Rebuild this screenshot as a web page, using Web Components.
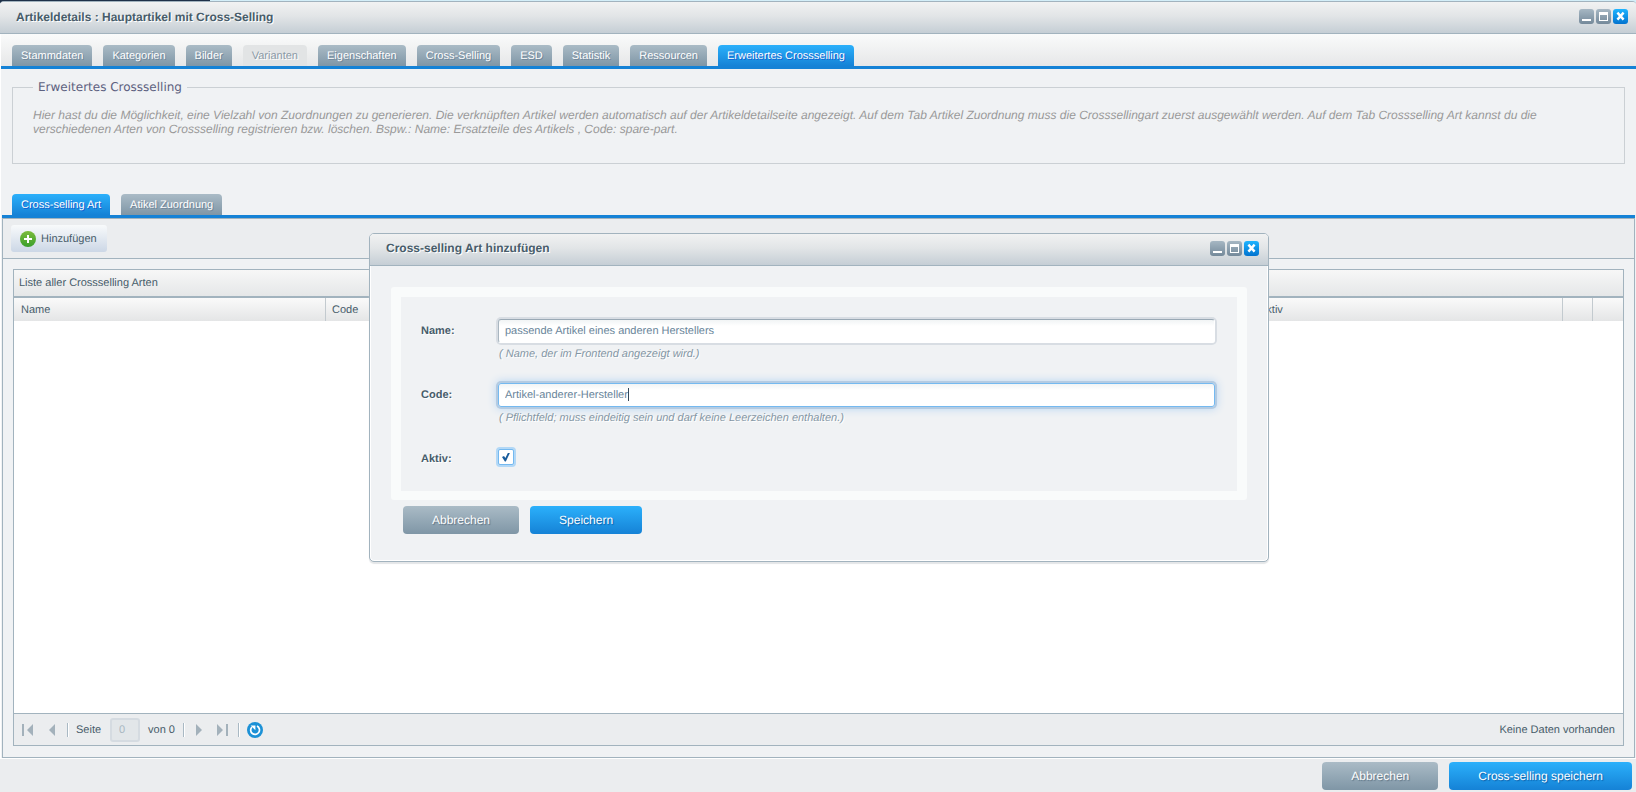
<!DOCTYPE html>
<html lang="de">
<head>
<meta charset="utf-8">
<title>Artikeldetails : Hauptartikel mit Cross-Selling</title>
<style>
html, body { margin: 0; height: 100%; }
body {
  --line: #a2b3be; --blue: #1582d6; --ink: #475c6a; --panel: #f0f2f4; --bar: #ebedef;
  font-family: "Liberation Sans", Arial, sans-serif; font-size: 11px; line-height: 14px; text-rendering: geometricPrecision;
  color: var(--ink); background: linear-gradient(90deg, #1f3148 210px, #d3eef8 210px);
  display: flex; flex-direction: column; padding-top: 1px; box-sizing: border-box; overflow: hidden;
}
</style>
</head>
<body>
<article-window></article-window>
<script>
const define = (name, html, after) => {
  const t = document.createElement('template');
  t.innerHTML = '<style>*{box-sizing:border-box}button,input{font:inherit;margin:0;text-rendering:inherit}</style>' + html;
  customElements.define(name, class extends HTMLElement {
    constructor() {
      super();
      this.attachShadow({ mode: 'open' }).append(t.content.cloneNode(true));
    }
    connectedCallback() { if (after) after(this, this.shadowRoot); }
  });
};

/* Minimise, maximise and close buttons */
define('window-tools', `
<style>
:host { display: flex; gap: 2px; }
button { width: 15px; height: 15px; padding: 0; border: 0; border-radius: 3px; background: linear-gradient(#a6b7c3, #74899a); }
button.close { background: linear-gradient(#1fb4ff, #0273cf); }
svg { display: block; }
</style>
<button type="button" aria-label="Minimieren"><svg width="15" height="15"><path d="M3 10h9v2H3z" fill="#fff"/></svg></button>
<button type="button" aria-label="Maximieren"><svg width="15" height="15"><path d="M3 3h9v9H3zM4 6v5h7V6z" fill="#fff" fill-rule="evenodd"/></svg></button>
<button type="button" aria-label="Schließen" class="close"><svg width="15" height="15"><path d="M4.4 3.6l6.2 7M10.6 3.6l-6.2 7" stroke="#fff" stroke-width="2.4"/></svg></button>`);

/* Title bar of a window */
define('title-bar', `
<style>
:host { display: flex; align-items: center; justify-content: space-between; height: 32px; box-sizing: border-box;
  padding: 0 8px 2px 16px; border-bottom: 1px solid var(--line); background: linear-gradient(#f1f2f2, #e2e5e7 45%, #c5ced5); }
h1 { margin: 0; font-size: 12px; line-height: 16px; text-shadow: 1px 1px 0 #fff; }
</style>
<h1><slot></slot></h1><window-tools></window-tools>`);

define('tab-item', `
<style>
:host { display: block; }
button { display: block; height: 21px; padding: 0 9px; border: 0; border-radius: 4px 4px 0 0; color: #fff; white-space: nowrap;
  background: linear-gradient(#aabbc6, #7f96a6); text-shadow: 1px 1px 0 #71879a; }
:host([active]) button { background: linear-gradient(#2bb0fb, #1582d6); text-shadow: 1px 1px 0 #1560cf; }
button:disabled { background: #e2e4e5; color: #8b9aa6; text-shadow: 1px 1px 0 #fff; }
</style>
<button type="button" role="tab"><slot></slot></button>`, (host, root) => {
  const b = root.querySelector('button');
  b.disabled = host.hasAttribute('disabled');
  b.setAttribute('aria-selected', host.hasAttribute('active'));
});

define('tab-bar', `
<style>
:host { display: flex; align-items: flex-end; gap: 11px; padding: 0 11px; box-sizing: border-box; border-bottom: 3px solid var(--blue); }
</style><slot></slot>`);

define('push-button', `
<style>
:host { display: block; }
button { display: block; height: 28px; padding: 0 29px; border: 0; border-radius: 4px; color: #fff; font-size: 12px; white-space: nowrap;
  background: linear-gradient(#aabbc6, #7f96a6); text-shadow: 1px 1px 1px #5e7485; }
:host([primary]) button { background: linear-gradient(#2bb0fb, #1582d6); text-shadow: 1px 1px 1px #0b5fa8; }
</style>
<button type="button"><slot></slot></button>`);

define('info-box', `
<style>
:host { display: block; padding: 11px 11px 0 12px; }
fieldset { margin: 0; padding: 0 20px; height: 84px; border: 1px solid #cbd0d4; min-width: 0; }
legend { padding: 0 5px; font: 12px/14px "DejaVu Sans", Verdana, sans-serif; color: #5d6180; }
p { margin: 14px 0 0; font-size: 12px; line-height: 14px; font-style: italic; color: #999; }
</style>
<fieldset><legend>Erweitertes Crossselling</legend><p><slot></slot></p></fieldset>`);

define('list-toolbar', `
<style>
:host { display: flex; align-items: center; height: 40px; box-sizing: border-box; padding: 0 8px; background: var(--bar); border-bottom: 1px solid var(--line); }
button { display: flex; align-items: center; gap: 5px; height: 27px; padding: 0 10px 0 9px; border: 0; border-radius: 3px; color: inherit;
  background: linear-gradient(#f8fafb, #ccd7e6); }
</style>
<button type="button"><svg width="16" height="16"><defs><linearGradient id="g" x2="0" y2="1"><stop stop-color="#7cbc3c"/><stop offset="1" stop-color="#3a9f2c"/></linearGradient></defs>
<circle cx="8" cy="8" r="8" fill="url(#g)"/><path d="M8 4v8M4 8h8" stroke="#fff" stroke-width="2"/></svg><span>Hinzufügen</span></button>`);

define('paging-bar', `
<style>
:host { display: flex; align-items: center; height: 32px; box-sizing: border-box; padding: 0 8px; background: var(--bar); border-top: 1px solid var(--line); }
button { width: 12px; height: 16px; padding: 0; border: 0; background: none; }
svg { display: block; }
i { width: 2px; height: 14px; border-left: 1px solid #a9b9c4; border-right: 1px solid #fff; }
label { display: flex; align-items: center; gap: 9px; margin: 0 8px 0 7px; }
input { width: 30px; height: 24px; padding: 0 7px; border: 2px solid #d5dbe1; border-radius: 3px; background: #e2e6e9; color: #a9b8c2; }
.prev { margin: 0 7px 0 14px; }
.sep { margin: 0 11px 0 8px; }
.last { margin: 0 9px; }
button.reload { width: 16px; margin-left: 7px; }
p { margin: 0 0 0 auto; }
</style>
<button type="button" aria-label="Erste Seite" disabled><svg width="12" height="16"><path d="M0 2h2v12H0zM11 2v12L5 8z" fill="#a3b1bb"/></svg></button>
<button type="button" aria-label="Vorherige Seite" disabled class="prev"><svg width="12" height="16"><path d="M7 2v12L1 8z" fill="#a3b1bb"/></svg></button><i></i>
<label>Seite <input type="text" value="0" disabled></label><span>von 0</span>
<i class="sep"></i>
<button type="button" aria-label="Nächste Seite" disabled><svg width="12" height="16"><path d="M0 2v12l6-6z" fill="#a3b1bb"/></svg></button>
<button type="button" aria-label="Letzte Seite" disabled class="last"><svg width="12" height="16"><path d="M0 2v12l6-6zM9 2h2v12H9z" fill="#a3b1bb"/></svg></button><i></i>
<button type="button" aria-label="Aktualisieren" class="reload"><svg width="16" height="16"><circle cx="8" cy="8" r="8" fill="#1c91d6"/><path d="M10 4.1A4.4 4.4 0 1 1 4.9 5" fill="none" stroke="#fff" stroke-width="1.7"/><path d="M3.6 3.4h4.8v4.8z" fill="#fff"/></svg></button>
<p>Keine Daten vorhanden</p>`);

define('type-grid', `
<style>
:host { display: flex; flex-direction: column; flex: 1; margin: 10px 10px 11px; border: 1px solid var(--line); background: #fff; }
h2 { margin: 0; height: 28px; padding: 6px 5px; font-size: 11px; line-height: 14px; font-weight: 400; border-bottom: 2px solid var(--line);
  background: linear-gradient(#f7f7f7, #e5e7e8); }
table { width: 100%; table-layout: fixed; border-collapse: separate; border-spacing: 0; }
th { height: 23px; padding: 0 7px; text-align: left; font-weight: 400; background: linear-gradient(#fafafa, #e4e5e6); }
th + th { border-left: 1px solid #c3cacf; padding-left: 6px; }
.name { width: 311px; }
.aktiv { width: 310px; }
.act { width: 30px; }
.end { width: 31px; }
.body { flex: 1; }
</style>
<h2>Liste aller Crossselling Arten</h2>
<table><thead><tr><th class="name">Name</th><th>Code</th><th class="aktiv">Aktiv</th><th class="act"></th><th class="end"></th></tr></thead></table>
<div class="body"></div>
<paging-bar></paging-bar>`);

/* Labelled text field; with the "caret" attribute it is drawn focused */
define('text-field', `
<style>
:host { display: grid; grid-template-columns: 75px 1fr; row-gap: 4px; }
label { font-weight: 700; align-self: center; text-shadow: 1px 1px 0 #fff; }
.box { display: flex; align-items: center; height: 24px; margin: 0 2px; padding: 0 6px; background: linear-gradient(#f1f4f5, #fff 6px); border: 1px solid #fff;
  border-top-color: #9aa9b5; border-left-color: #a9b6c0; border-radius: 3px; box-shadow: 0 0 0 2px #d8dde3; }
input { flex: 1; min-width: 0; padding: 0; border: 0; outline: 0; background: none; color: #69859a; }
i { display: none; width: 1px; height: 13px; background: #33475a; }
:host([caret]) input { flex: none; field-sizing: content; }
:host([caret]) i { display: block; }
:host([caret]) .box { border-color: #74b9f0; box-shadow: 0 0 0 2px #b4cbe2, 0 0 8px 2px #b9d6f2; }
p { grid-column: 2; margin: 0 0 0 3px; font-style: italic; color: #8496a4; text-shadow: 1px 1px 0 #fff; }
</style>
<label for="f"></label><div class="box"><input id="f" type="text"><i></i></div><p><slot></slot></p>`, (host, root) => {
  root.querySelector('label').textContent = host.getAttribute('label');
  root.querySelector('input').value = host.getAttribute('value');
});

define('check-field', `
<style>
:host { display: grid; grid-template-columns: 75px 1fr; align-items: center; }
label { font-weight: 700; text-shadow: 1px 1px 0 #fff; padding-top: 3px; }
input { appearance: none; width: 16px; height: 16px; margin: 0 2px; border: 1px solid #74b9f0; border-radius: 2px; box-shadow: 0 0 0 2px #b3d8f6; background: #fff; display: grid; place-items: center; }
input:checked::before { content: ""; width: 8px; height: 9px; background: #185c9c; clip-path: polygon(0 50%, 25% 38%, 42% 62%, 76% 0, 100% 4%, 48% 100%, 36% 100%); }
</style>
<label for="c"><slot></slot></label><input id="c" type="checkbox" checked>`);

define('type-dialog', `
<style>
:host { display: block; width: 900px; max-width: 90%; box-sizing: border-box; border: 1px solid var(--line); border-radius: 5px; overflow: hidden;
  background: var(--panel); box-shadow: 0 2px 1px #e4e6e8, inset 0 0 0 1px #fff; }
title-bar { padding-right: 9px; }
.content { padding: 21px 21px 27px; }
form { border: 10px solid #f9fbfb; border-bottom-width: 9px; border-radius: 3px; padding: 22px 20px 25px; display: flex; flex-direction: column; gap: 22px; }
.buttons { display: flex; gap: 11px; padding: 6px 12px 0; }
check-field { margin-top: 2px; }
</style>
<title-bar>Cross-selling Art hinzufügen</title-bar>
<div class="content">
<form>
<text-field label="Name:" value="passende Artikel eines anderen Herstellers">( Name, der im Frontend angezeigt wird.)</text-field>
<text-field caret label="Code:" value="Artikel-anderer-Hersteller">( Pflichtfeld; muss eindeitig sein und darf keine Leerzeichen enthalten.)</text-field>
<check-field>Aktiv:</check-field>
</form>
<div class="buttons"><push-button>Abbrechen</push-button><push-button primary>Speichern</push-button></div>
</div>`);

define('article-window', `
<style>
:host { position: relative; display: flex; flex-direction: column; flex: 1; min-height: 0; border: 0 solid var(--line); border-top-width: 1px; border-radius: 4px 4px 0 0; background: var(--panel); box-shadow: inset 1px 0 #fff; overflow: hidden; }
tab-bar.main { height: 35px; margin-left: 1px; background: linear-gradient(#fafbfb, #e6e7e8); }
tab-bar.sub { margin: 30px 1px 0 2px; padding: 0 10px; }
.pane { display: flex; flex-direction: column; flex: 1; margin: 0 1px 0 2px; border: 1px solid var(--line); }
footer { display: flex; justify-content: flex-end; gap: 11px; padding: 3px 4px 2px; background: var(--bar); border-top: 1px solid #fff; }
.layer { position: absolute; inset: 0 0 0 2px; display: grid; place-items: center; }
</style>
<title-bar>Artikeldetails : Hauptartikel mit Cross-Selling</title-bar>
<tab-bar class="main" role="tablist">
<tab-item>Stammdaten</tab-item><tab-item>Kategorien</tab-item><tab-item>Bilder</tab-item><tab-item disabled>Varianten</tab-item><tab-item>Eigenschaften</tab-item><tab-item>Cross-Selling</tab-item><tab-item>ESD</tab-item><tab-item>Statistik</tab-item><tab-item>Ressourcen</tab-item><tab-item active>Erweitertes Crossselling</tab-item>
</tab-bar>
<info-box>Hier hast du die Möglichkeit, eine Vielzahl von Zuordnungen zu generieren. Die verknüpften Artikel werden automatisch auf der Artikeldetailseite angezeigt. Auf dem Tab Artikel Zuordnung muss die Crosssellingart zuerst ausgewählt werden. Auf dem Tab Crossselling Art kannst du die verschiedenen Arten von Crossselling registrieren bzw. löschen. Bspw.: Name: Ersatzteile des Artikels , Code: spare-part.</info-box>
<tab-bar class="sub" role="tablist"><tab-item active>Cross-selling Art</tab-item><tab-item>Atikel Zuordnung</tab-item></tab-bar>
<div class="pane"><list-toolbar></list-toolbar><type-grid></type-grid></div>
<footer><push-button>Abbrechen</push-button><push-button primary>Cross-selling speichern</push-button></footer>
<div class="layer"><type-dialog></type-dialog></div>`);
</script>
</body>
</html>
